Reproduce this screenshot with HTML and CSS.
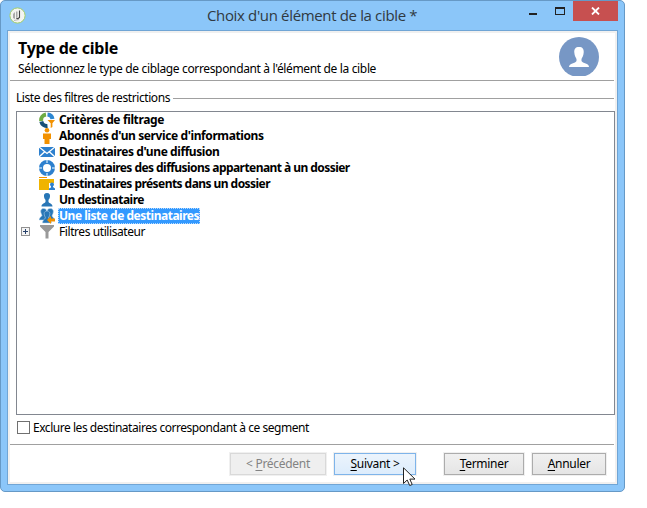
FILE: index.html
```html
<!DOCTYPE html>
<html lang="fr">
<head>
<meta charset="utf-8">
<title>Choix d'un élément de la cible</title>
<link rel="stylesheet" href="styles.css">
</head>
<body>
<div class="window">
  <header class="titlebar">
    <svg class="app-icon" width="17" height="17" viewBox="0 0 17 17"><circle cx="8.500" cy="8.500" r="7.600" fill="#f4f5f1" stroke="#a5cf68"/><path d="M4 7l2-2v7l-2-1zM7 4.500h1.500v6H7z" fill="#aaa"/><path d="M10.500 3.500v7l-2 1.500-1-1" fill="none" stroke="#444" stroke-width="1.100"/><path d="M5 13.500l5-1" stroke="#bbb"/></svg>
    <h1 class="caption">Choix d'un élément de la cible *</h1>
    <div class="controls">
      <span class="minimize"></span><span class="maximize"></span>
      <span class="close"><svg width="9" height="8" viewBox="0 0 9 8"><path d="M1 .5l7 7M8 .5l-7 7" stroke="#fff" stroke-width="1.800"/></svg></span>
    </div>
  </header>
  <main class="client">
    <section class="intro">
      <div>
        <h2 class="heading">Type de cible</h2>
        <p class="subtitle">Sélectionnez le type de ciblage correspondant à l'élément de la cible</p>
      </div>
      <svg class="avatar" width="40" height="39" viewBox="0 0 40 39"><circle cx="20" cy="20" r="20" fill="#7797c5"/><path d="M20 10c3.500 0 5 2 4.700 5.500-.2 3.500-1.500 5-2.200 6.500v2c1 2.500 7.500 2 7.500 6H10c0-4 6.500-3.500 7.500-6v-2c-.7-1.500-2-3-2.200-6.500C15 12 16.500 10 20 10z" fill="#fff"/></svg>
    </section>
    <div class="group"><span class="group-label">Liste des filtres de restrictions</span><i class="rule"></i></div>
    <ul class="tree">
      <li><svg width="16" height="16" viewBox="0 0 16 16"><g fill="none" stroke-width="4"><path d="M7 2.500A5.800 5.800 0 0 0 2.200 9" stroke="#6cab43"/><path d="M2.300 9.500A5.800 5.800 0 0 0 8.500 14" stroke="#195078"/><path d="M8.500 2.500A5.500 5.500 0 0 1 13.500 7" stroke="#2d87d2"/></g><path d="M8.500 8H16l-2.600 3.300V15l-1.700 1v-4.700z" fill="#f29100"/></svg><b class="t1">Critères de filtrage</b></li>
      <li><svg width="16" height="16" viewBox="0 0 16 16"><circle cx="8" cy="2.300" r="2.300" fill="#f29100"/><path d="M4 5.500h8V11h-1.500v5h-5v-5H4z" fill="#f29100"/></svg><b class="t2">Abonnés d'un service d'informations</b></li>
      <li><svg width="16" height="16" viewBox="0 0 16 16"><path d="M0 3h16v10H0z" fill="#2d80ce"/><path d="M0 3l8 6.500L16 3M0 13l6-5.500M16 13l-6-5.500" fill="none" stroke="#fff" stroke-width="1.300"/></svg><b class="t3">Destinataires d'une diffusion</b></li>
      <li><svg width="16" height="16" viewBox="0 0 16 16"><circle cx="8" cy="8" r="6" fill="none" stroke="#2d80ce" stroke-width="4"/><path d="M8 0v3M8 13v3M0 8h3M13 8h3" stroke="#b5d8f5" stroke-width="1.500"/></svg><b class="t4">Destinataires des diffusions appartenant à un dossier</b></li>
      <li><svg width="16" height="16" viewBox="0 0 16 16"><path d="M0 1h8v1H0z" fill="#f29100"/><path d="M0 3h15v4h-5v7H0z" fill="#f0b400"/><circle cx="13" cy="8.500" r="2" fill="#2d80ce"/><path d="M12 9h2v2l2 1.500V14h-6v-1.500l2-1z" fill="#2d80ce"/></svg><b class="t5">Destinataires présents dans un dossier</b></li>
      <li><svg width="16" height="16" viewBox="0 0 16 16"><path d="M8 1c2.500 0 3.200 1.500 3 3.500C10.800 6.500 10 7 9.500 8v2c1 1.500 4 1.500 4 4.500h-11c0-3 3-3 4-4.500V8C6 7 5.200 6.500 5 4.500 4.800 2.500 5.500 1 8 1z" fill="#2876b6"/></svg><b class="t6">Un destinataire</b></li>
      <li><svg width="16" height="16" viewBox="0 0 16 16"><g fill="#2876b6" stroke="#c2dcf1" stroke-width=".5"><path d="M4.500.5C7 .5 8 2 7.500 4L6 7.500l2 3V12H0c0-2 2-3 3-4.500L2 5C1 2 2.500.5 4.500.5zM11 .5c3 0 4 2 3 5l-1 2.500 2 2.500V12H8l2-4-2-4C8 2 9 .5 11 .5z"/><path d="M8 3c2.500 0 3.500 2 2.500 4.500L9.500 10c1 1.500 3 2 3 5h-9c0-3 2-3.500 3-5L5.500 7.500C4.500 5 5.500 3 8 3z"/></g><path d="M8 12l4-4v2.500h4v3h-4V16z" fill="#f29100"/></svg><b class="t7 selected">Une liste de destinataires</b></li>
      <li class="parent"><i class="expander"></i><svg width="16" height="16" viewBox="0 0 16 16"><path d="M1 1h14v1.500L9.500 8v6.500h-3V8L1 2.500z" fill="#999"/></svg><span class="t8">Filtres utilisateur</span></li>
    </ul>
    <label class="exclude"><i class="checkbox"></i><span class="exclude-label">Exclure les destinataires correspondant à ce segment</span></label>
    <footer class="actions">
      <button class="previous" disabled><span>&lt; <u>P</u>récédent</span></button>
      <button class="next"><span><u>S</u>uivant &gt;</span></button>
      <button class="finish"><span><u>T</u>erminer</span></button>
      <button class="cancel"><span><u>A</u>nnuler</span></button>
    </footer>
  </main>
  <svg class="cursor" width="13" height="20" viewBox="0 0 13 20"><path d="M.5.8v15.700l3.700-3.500 2.500 5.500 2.500-1-2.400-5.400h5.200z" fill="#fff" stroke="#222"/></svg>
</div>
</body>
</html>
```
FILE: styles.css
```css
* { box-sizing: border-box; }
body { margin: 0; background: #fff; color: #000; font: 12px/16px "Noto Sans", sans-serif; }
h1, h2, p, ul { margin: 0; padding: 0; }
svg { display: block; flex: none; }
.window { position: relative; width: 625px; height: 492px; padding: 0 6px 6px; border: 1px solid #6699c6; border-radius: 5px; background: #8bc6f9; }
.titlebar { display: flex; height: 29px; }
.app-icon { margin: 6px 0 0 2px; }
.caption { margin: 4px 0 0 181px; color: #303941; font: 15px/21px "Open Sans", sans-serif; white-space: nowrap; letter-spacing: -.35px; }
.controls { display: flex; margin-left: auto; }
.minimize { width: 8px; height: 2px; margin: 12px 18px 0 0; background: #222; }
.maximize { width: 10px; height: 8px; margin: 6px 8px 0 0; border: 1px solid #222; border-top-width: 2px; }
.close { display: flex; align-items: center; justify-content: center; width: 45px; height: 20px; background: #c75050; }
.client { width: 611px; height: 455px; border: 1px solid #70a5d5; background: #fff; box-shadow: inset 0 0 0 2px #f0f0f0; }
.intro { display: flex; justify-content: space-between; height: 50px; margin: 0 3px 0 2px; padding: 6px 15px 0 8px; border-bottom: 1px solid #a0a0a0; }
.heading { font: bold 16px/22px "Noto Sans", sans-serif; letter-spacing: -.24px; white-space: nowrap; }
.subtitle { margin-top: 2px; letter-spacing: -.35px; white-space: nowrap; }
.group { display: flex; align-items: center; height: 30px; padding: 4px 3px 0 8px; white-space: nowrap; }
.group-label { letter-spacing: -.42px; }
.rule { flex: 1; height: 1px; margin-left: 3px; background: #a0a0a0; }
.tree { width: 599px; height: 304px; margin-left: 8px; border: 1px solid #828790; list-style: none; }
.tree li { display: flex; height: 16px; padding-left: 22px; white-space: nowrap; }
.tree li > b, .tree li > span { margin-left: 3px; padding: 0 1px; line-height: 16px; }
.t1 { letter-spacing: -.37px; }
.t2 { letter-spacing: -.4px; }
.t3 { letter-spacing: -.42px; }
.t4, .t5 { letter-spacing: -.555px; }
.t6 { letter-spacing: -.53px; }
.t7 { letter-spacing: -.48px; }
.t8 { letter-spacing: -.42px; }
.tree .selected { background: #39f; color: #fff; outline: 1px dotted #b9dcff; outline-offset: -1px; }
.tree .parent { padding-left: 4px; }
.expander { width: 9px; height: 9px; margin: 3px 9px 0 0; border: 1px solid #919191; background: linear-gradient(#27416b, #27416b) 1px 3px / 5px 1px no-repeat, linear-gradient(#27416b, #27416b) 3px 1px / 1px 5px no-repeat, #f4f4f4; }
.exclude { display: flex; align-items: center; height: 30px; margin: 0 3px 0 2px; padding: 0 0 4px 7px; border-bottom: 1px solid #a0a0a0; white-space: nowrap; }
.exclude-label { letter-spacing: -.46px; }
.checkbox { width: 13px; height: 13px; margin-right: 3px; border: 1px solid #707070; }
.actions { display: flex; justify-content: flex-end; padding: 8px 11px 0 0; }
button { height: 22px; padding: 0; border: 1px solid #acacac; background: linear-gradient(#f0f0f0, #e5e5e5); box-shadow: 0 0 0 1px #f0f0f0; color: #000; font: inherit; letter-spacing: -.3px; white-space: nowrap; }
u { text-underline-offset: 2px; text-decoration-thickness: 1px; }
.previous { width: 96px; margin-right: 8px; border-color: #d9d9d9; background: #efefef; color: #838383; }
.next { width: 82px; margin-right: 28px; border-color: #7eb4ea; background: linear-gradient(#ecf4fc, #dcecfc); }
.finish { width: 80px; margin-right: 8px; }
.cancel { width: 74px; }
.cursor { position: absolute; left: 402px; top: 466px; }
```
